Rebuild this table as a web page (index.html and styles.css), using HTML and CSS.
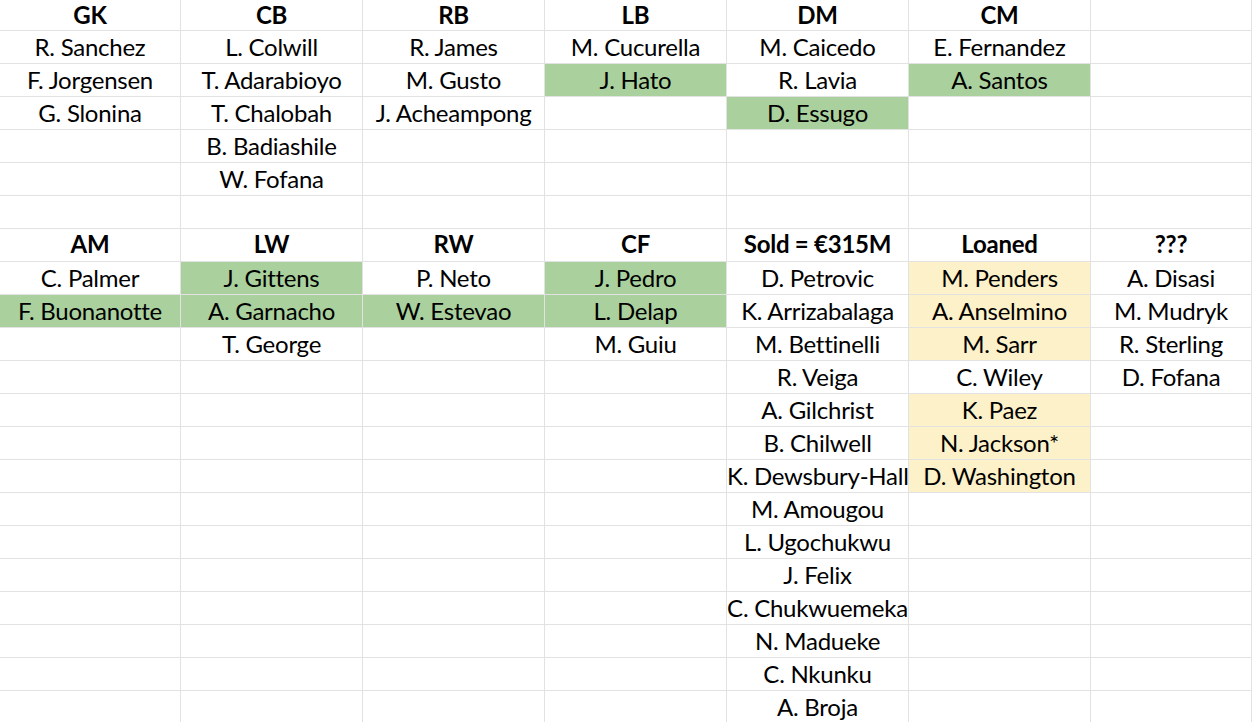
FILE: index.html
```html
<!DOCTYPE html>
<html>
<head>
<meta charset="utf-8">
<link rel="stylesheet" href="styles.css">
</head>
<body>
<div class="sheet">
  <div class="c h">GK</div><div class="c h">CB</div><div class="c h">RB</div><div class="c h">LB</div><div class="c h">DM</div><div class="c h">CM</div><div class="c h"></div>

  <div class="c">R. Sanchez</div><div class="c">L. Colwill</div><div class="c">R. James</div><div class="c">M. Cucurella</div><div class="c">M. Caicedo</div><div class="c">E. Fernandez</div><div class="c"></div>
  <div class="c">F. Jorgensen</div><div class="c">T. Adarabioyo</div><div class="c">M. Gusto</div><div class="c g">J. Hato</div><div class="c">R. Lavia</div><div class="c g">A. Santos</div><div class="c"></div>
  <div class="c">G. Slonina</div><div class="c">T. Chalobah</div><div class="c">J. Acheampong</div><div class="c"></div><div class="c g">D. Essugo</div><div class="c"></div><div class="c"></div>
  <div class="c"></div><div class="c">B. Badiashile</div><div class="c"></div><div class="c"></div><div class="c"></div><div class="c"></div><div class="c"></div>
  <div class="c"></div><div class="c">W. Fofana</div><div class="c"></div><div class="c"></div><div class="c"></div><div class="c"></div><div class="c"></div>
  <div class="c"></div><div class="c"></div><div class="c"></div><div class="c"></div><div class="c"></div><div class="c"></div><div class="c"></div>

  <div class="c h">AM</div><div class="c h">LW</div><div class="c h">RW</div><div class="c h">CF</div><div class="c h">Sold = €315M</div><div class="c h">Loaned</div><div class="c h">???</div>

  <div class="c">C. Palmer</div><div class="c g">J. Gittens</div><div class="c">P. Neto</div><div class="c g">J. Pedro</div><div class="c">D. Petrovic</div><div class="c y">M. Penders</div><div class="c">A. Disasi</div>
  <div class="c g">F. Buonanotte</div><div class="c g">A. Garnacho</div><div class="c g">W. Estevao</div><div class="c g">L. Delap</div><div class="c">K. Arrizabalaga</div><div class="c y">A. Anselmino</div><div class="c">M. Mudryk</div>
  <div class="c"></div><div class="c">T. George</div><div class="c"></div><div class="c">M. Guiu</div><div class="c">M. Bettinelli</div><div class="c y">M. Sarr</div><div class="c">R. Sterling</div>
  <div class="c"></div><div class="c"></div><div class="c"></div><div class="c"></div><div class="c">R. Veiga</div><div class="c">C. Wiley</div><div class="c">D. Fofana</div>
  <div class="c"></div><div class="c"></div><div class="c"></div><div class="c"></div><div class="c">A. Gilchrist</div><div class="c y">K. Paez</div><div class="c"></div>
  <div class="c"></div><div class="c"></div><div class="c"></div><div class="c"></div><div class="c">B. Chilwell</div><div class="c y">N. Jackson*</div><div class="c"></div>
  <div class="c"></div><div class="c"></div><div class="c"></div><div class="c"></div><div class="c">K. Dewsbury-Hall</div><div class="c y">D. Washington</div><div class="c"></div>
  <div class="c"></div><div class="c"></div><div class="c"></div><div class="c"></div><div class="c">M. Amougou</div><div class="c"></div><div class="c"></div>
  <div class="c"></div><div class="c"></div><div class="c"></div><div class="c"></div><div class="c">L. Ugochukwu</div><div class="c"></div><div class="c"></div>
  <div class="c"></div><div class="c"></div><div class="c"></div><div class="c"></div><div class="c">J. Felix</div><div class="c"></div><div class="c"></div>
  <div class="c"></div><div class="c"></div><div class="c"></div><div class="c"></div><div class="c">C. Chukwuemeka</div><div class="c"></div><div class="c"></div>
  <div class="c"></div><div class="c"></div><div class="c"></div><div class="c"></div><div class="c">N. Madueke</div><div class="c"></div><div class="c"></div>
  <div class="c"></div><div class="c"></div><div class="c"></div><div class="c"></div><div class="c">C. Nkunku</div><div class="c"></div><div class="c"></div>
  <div class="c"></div><div class="c"></div><div class="c"></div><div class="c"></div><div class="c">A. Broja</div><div class="c"></div><div class="c"></div>
</div>
</body>
</html>
```
FILE: styles.css
```css
html, body {
  margin: 0;
  padding: 0;
  background: #ffffff;
  overflow: hidden;
}

.sheet {
  display: grid;
  grid-template-columns: 181px repeat(5, 182px) 1fr;
  grid-template-rows: 31px;
  grid-auto-rows: 33px;
  width: 1252px;
  font-family: Lato, "Liberation Sans", sans-serif;
  font-size: 24px;
  letter-spacing: -0.25px;
  color: #000000;
}

.c {
  box-sizing: border-box;
  border-right: 1px solid #e2e2e2;
  border-bottom: 1px solid #e2e2e2;
  text-align: center;
  line-height: 32px;
  white-space: nowrap;
  overflow: visible;
}

.h {
  font-weight: 700;
  line-height: 30px;
}

.g {
  background: #aad19d;
}

.y {
  background: #fdf1c9;
}
```
